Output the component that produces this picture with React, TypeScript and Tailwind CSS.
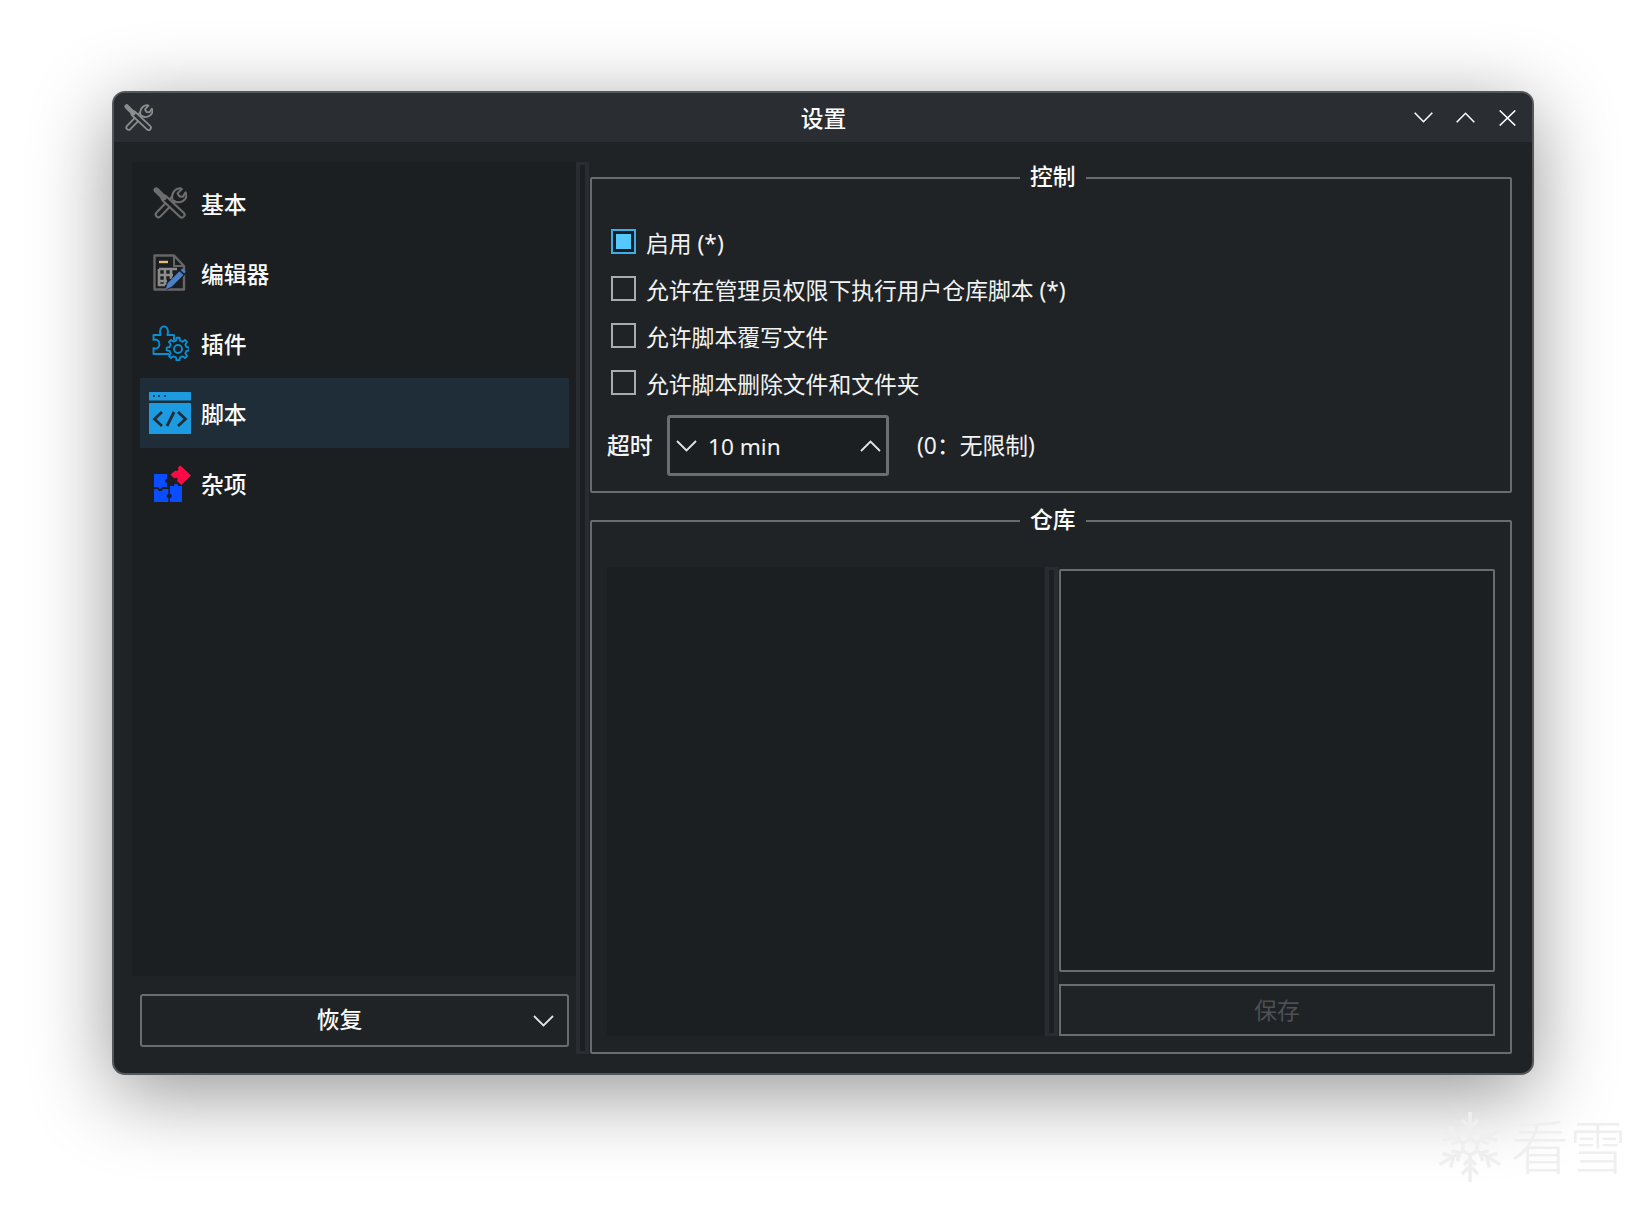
import type { ReactNode } from 'react'

// gear outline with square-ish teeth, used by the plugin icon
function gearPath(cx: number, cy: number, ro: number, ri: number, teeth: number) {
  const pts: string[] = []
  const step = (Math.PI * 2) / teeth
  for (let i = 0; i < teeth; i++) {
    const a = i * step - Math.PI / 2
    const w = step * 0.2
    const at = (r: number, t: number) => `${(cx + r * Math.cos(t)).toFixed(2)} ${(cy + r * Math.sin(t)).toFixed(2)}`
    pts.push(at(ri, a - w * 1.5), at(ro, a - w * 0.8), at(ro, a + w * 0.8), at(ri, a + w * 1.5))
  }
  return 'M' + pts.join(' L') + ' Z'
}

function ToolsIcon({ size, bg, line }: { size: number; bg: string; line: string }) {
  return (
    <svg width={size} height={size * 0.94} viewBox="0 0 34 32" fill="none">
      {/* wrench */}
      <path d="M5.5 27.5 L22 10.5" stroke={line} strokeWidth="7.6" strokeLinecap="round" />
      <path d="M5.5 27.5 L22 10.5" stroke={bg} strokeWidth="3.4" strokeLinecap="round" />
      <path d="M19.6 13.2 C18 8 20.6 2 26.8 1.2 L28.8 2 L24.6 6.4 L26.4 9.4 L30 9.6 L32.6 5.4 L33.6 7.4 C33.8 13 27.6 16.6 22.8 14.8 Z" fill={bg} stroke={line} strokeWidth="2.1" strokeLinejoin="round" />
      {/* screwdriver */}
      <path d="M11.5 11.5 L28.8 27.8" stroke={line} strokeWidth="7.6" strokeLinecap="round" />
      <path d="M11.5 11.5 L28.8 27.8" stroke={bg} strokeWidth="3.4" strokeLinecap="round" />
      <path d="M3.2 3 L11 10.6" stroke={line} strokeWidth="5.4" strokeLinecap="round" />
    </svg>
  )
}

function EditorIcon() {
  return (
    <svg width="33" height="37" viewBox="0 0 33 37" fill="none" className="mb-[2px] mr-[2px]">
      <path d="M1.5 1.5 H21 L31 12 V35.5 H1.5 Z" stroke="#666" strokeWidth="2.4" strokeLinejoin="round" />
      <path d="M21 1.5 V12 H31" stroke="#666" strokeWidth="2" />
      <path d="M6 8 H15" stroke="#e2bd78" strokeWidth="2.4" />
      <path d="M6 15 H24 M6 21 H20 M6 27 H14 M6 15 V31 H12 M12 15 V31 M18 15 V25" stroke="#8c8c8c" strokeWidth="2.6" />
      <path d="M13 36 L15 28 L28 15 L33 20 L20 33 Z" fill="#1c1f21" />
      <path d="M12.5 35.5 L14.8 29 L26.5 17.2 L30.4 21 L18.6 32.8 Z" fill="#4a80c8" />
      <path d="M27.6 16 L29.4 14.4 L32.6 17.6 L31.2 19.6 Z" fill="#4a80c8" />
    </svg>
  )
}

function PluginIcon() {
  return (
    <svg width="37" height="36" viewBox="0 0 37 36" fill="none" stroke="#0a8ed0" strokeWidth="1.9" strokeLinejoin="round">
      <path d="M17 29 H1.5 V23 C4 24.5 7.4 23 7.4 19.2 C7.4 15.4 4 13.6 1.5 15 V10 H8.6 C7 5.4 9 1.4 12 1.4 C15 1.4 17 5.4 15.4 10 H22 V15.5" />
      <path d={gearPath(26, 24, 11.4, 8.6, 8)} />
      <circle cx="26" cy="24" r="4" />
    </svg>
  )
}

function ScriptIcon() {
  return (
    <svg width="42" height="42" viewBox="0 0 42 42" fill="none">
      <rect x="0" y="0" width="42" height="8.5" rx="0.6" fill="#1d9be0" />
      <circle cx="5" cy="4" r="1.1" fill="#1f2d38" />
      <circle cx="10" cy="4" r="1.1" fill="#1f2d38" />
      <circle cx="16" cy="4" r="1.1" fill="#1f2d38" />
      <rect x="0" y="11" width="42" height="31" rx="0.6" fill="#1d9be0" />
      <path d="M13 20 L5.5 27 L13 34 M29 20 L36.5 27 L29 34 M25 20 L18 34" stroke="#1f2d38" strokeWidth="2.8" />
    </svg>
  )
}

function MiscIcon() {
  return (
    <svg width="37" height="37" viewBox="0 0 37 37" fill="none" className="ml-[4px]">
      <path d="M0 9 H13 V14 C10.5 13.5 10.5 18 13 17.6 V22 H8 C8.6 24 4 24.6 4.4 22 H0 Z" fill="#0a4cff" />
      <path d="M0 24 H4 C4 27 9 27 8.6 24 H14.4 V29 C12 29 12 33 14.4 33 V37 H0 Z" fill="#0a4cff" />
      <path d="M16 21 H20 C19.6 18 24.4 18 24 21 H28 V37 H16 V33 C18.4 33 18.4 29 16 29 Z" fill="#0a4cff" />
      <path d="M26.4 0.6 L37 10.6 L27.4 20 L23 16 C25 14 22.4 11.6 20.6 13.6 L16.4 9.8 L21.4 5.4 C23.4 7 25.6 4.6 23.6 2.8 Z" fill="#ff0a46" />
    </svg>
  )
}

function Chevron({ up, className }: { up?: boolean; className?: string }) {
  return (
    <svg width="21" height="12" viewBox="0 0 21 12" fill="none" className={className}>
      <path d={up ? 'M1 11 L10.5 1.5 L20 11' : 'M1 1 L10.5 10.5 L20 1'} stroke="#e4e5e6" strokeWidth="1.8" />
    </svg>
  )
}

function Snowflake() {
  const arms = [0, 60, 120, 180, 240, 300]
  return (
    <svg width="66" height="72" viewBox="-33 -36 66 72" fill="none" stroke="#efefef" strokeWidth="3.6">
      {arms.map(a => (
        <g key={a} transform={`rotate(${a})`}>
          <path d="M0 -8 V-35 M-8 -27 L0 -19 L8 -27 M-6 -18 L0 -12 L6 -18" />
        </g>
      ))}
      <path d="M0 -8 L7 -4 V4 L0 8 L-7 4 V-4 Z" />
    </svg>
  )
}

function Splitter({ className }: { className?: string }) {
  return (
    <div className={`w-[13px] shrink-0 border-x-[4px] border-y-[3px] border-[#292d31] bg-[#1d2022] ${className ?? ''}`} />
  )
}

function GroupBox({ title, className, children }: { title: string; className?: string; children: ReactNode }) {
  return (
    <div className={`relative rounded-[2px] border-2 border-[#696c6f] ${className ?? ''}`}>
      <span className="absolute left-[428px] top-[-16px] bg-[#202326] px-[10px] text-[22.8px] font-medium leading-[28px] text-[#fcfcfc]">
        {title}
      </span>
      {children}
    </div>
  )
}

function CheckRow({ label, checked }: { label: string; checked?: boolean }) {
  return (
    <div className="flex h-[24px] items-center">
      <span
        className={`flex h-[25px] w-[25px] shrink-0 items-center justify-center border-2 ${
          checked ? 'border-[#3daee9] bg-[#1c1f21]' : 'border-[#a9abad]'
        }`}
      >
        {checked && <span className="h-[15px] w-[15px] bg-[#54c8ff]" />}
      </span>
      <span className="ml-[10px] whitespace-nowrap pt-[5px] text-[22.8px] leading-[30px] text-[#f2f3f3]">{label}</span>
    </div>
  )
}

const navItems = [
  { label: '基本', icon: <ToolsIcon size={34} bg="#1c1f21" line="#6d6d6d" /> },
  { label: '编辑器', icon: <EditorIcon /> },
  { label: '插件', icon: <PluginIcon /> },
  { label: '脚本', icon: <ScriptIcon />, active: true },
  { label: '杂项', icon: <MiscIcon /> },
]

export default function App() {
  return (
    <div className="relative h-[1208px] w-[1646px] overflow-hidden bg-white pl-[112px] pt-[91px] font-['Noto_Sans','Noto_Sans_CJK_SC',sans-serif]">
      <div className="flex h-[984px] w-[1422px] flex-col overflow-hidden rounded-[13px] border-2 border-[#55585b] bg-[#202326] shadow-[0_18px_80px_0_rgba(0,0,0,0.42)]">
        {/* title bar */}
        <div className="flex h-[49px] shrink-0 items-center bg-[#2a2e32] pl-[10px] pr-[16px]">
          <ToolsIcon size={29} bg="#2a2e32" line="#8b8c8d" />
          <div className="flex-1 pl-[80px] pt-[3px] text-center text-[22.8px] font-medium text-[#fcfcfc]">设置</div>
          <div className="flex items-center">
            <svg width="19" height="11" viewBox="0 0 19 11" fill="none">
              <path d="M0.7 0.7 L9.5 9.7 L18.3 0.7" stroke="#fcfcfc" strokeWidth="1.6" />
            </svg>
            <svg width="19" height="11" viewBox="0 0 19 11" fill="none" className="ml-[23px]">
              <path d="M0.7 10.3 L9.5 1.3 L18.3 10.3" stroke="#fcfcfc" strokeWidth="1.6" />
            </svg>
            <svg width="17" height="16" viewBox="0 0 17 16" fill="none" className="ml-[24px]">
              <path d="M0.7 0.5 L16.3 15.5 M16.3 0.5 L0.7 15.5" stroke="#fcfcfc" strokeWidth="1.6" />
            </svg>
          </div>
        </div>

        <div className="flex min-h-0 flex-1 pb-[19px] pl-[18px] pt-[20px]">
          {/* sidebar */}
          <div className="flex w-[444px] shrink-0 flex-col">
            <div className="h-[814px] bg-[#1c1f21] pl-[8px] pr-[7px] pt-[6px]">
              {navItems.map(item => (
                <div key={item.label} className={`flex h-[70px] items-center ${item.active ? 'bg-[#1f2d38]' : ''}`}>
                  <div className="flex w-[60px] shrink-0 justify-center">{item.icon}</div>
                  <span className="ml-[1px] pt-[5px] text-[22.8px] font-medium text-[#fcfcfc]">{item.label}</span>
                </div>
              ))}
            </div>
            <div className="ml-[8px] mr-[7px] mt-[18px] flex h-[53px] items-center rounded-[3px] border-2 border-[#696c6f] pr-[13px]">
              <span className="flex-1 pl-[4px] text-center text-[22.8px] font-medium text-[#fcfcfc]">恢复</span>
              <Chevron />
            </div>
          </div>

          <Splitter />

          {/* right column */}
          <div className="ml-[1px] flex w-[922px] flex-col gap-[27px] pt-[15px]">
            <GroupBox title="控制" className="h-[316px] pl-[19px] pt-[50px]">
              <div className="flex flex-col gap-[23px]">
                <CheckRow label="启用 (*)" checked />
                <CheckRow label="允许在管理员权限下执行用户仓库脚本 (*)" />
                <CheckRow label="允许脚本覆写文件" />
                <CheckRow label="允许脚本删除文件和文件夹" />
              </div>
              <div className="mt-[21px] flex items-center">
                <span className="ml-[-4px] w-[60px] pt-[2px] text-[22.8px] font-medium text-[#f2f3f3]">超时</span>
                <div className="flex h-[61px] w-[222px] items-center rounded-[3px] border-[3px] border-[#6b6e71] bg-[#1c1f21] pl-[6px] pr-[5px]">
                  <Chevron />
                  <span className="ml-[11px] flex-1 pt-[2px] text-[22.6px] text-[#f2f3f3]">10 min</span>
                  <Chevron up />
                </div>
                <span className="ml-[28px] whitespace-nowrap pt-[2px] text-[22.8px] text-[#f2f3f3]">(0：无限制)</span>
              </div>
            </GroupBox>

            <GroupBox title="仓库" className="flex h-[534px] pb-[16px] pl-[15px] pr-[15px] pt-[45px]">
              <div className="flex-1 bg-[#1c1f21]" />
              <Splitter className="mx-[1px]" />
              <div className="flex w-[436px] shrink-0 flex-col gap-[12px] pt-[2px]">
                <div className="flex-1 rounded-[2px] border-2 border-[#696c6f] bg-[#1c1f21]" />
                <div className="flex h-[52px] items-center justify-center border-2 border-[#696c6f] pt-[2px] text-[22.8px] text-[#4e5154]">
                  保存
                </div>
              </div>
            </GroupBox>
          </div>
        </div>
      </div>

      {/* watermark */}
      <div className="absolute left-[1437px] top-[1111px] flex items-center gap-[8px]">
        <Snowflake />
        <span className="whitespace-nowrap text-[58px] font-light leading-[72px] text-[#efefef]">看雪</span>
      </div>
    </div>
  )
}
